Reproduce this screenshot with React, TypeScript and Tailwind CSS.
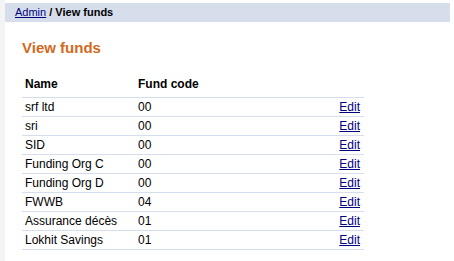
const funds = [
  { name: "srf ltd", code: "00" },
  { name: "sri", code: "00" },
  { name: "SID", code: "00" },
  { name: "Funding Org C", code: "00" },
  { name: "Funding Org D", code: "00" },
  { name: "FWWB", code: "04" },
  { name: "Assurance décès", code: "01" },
  { name: "Lokhit Savings", code: "01" },
];

export default function App() {
  return (
    <div className="flex min-h-[261px] bg-white font-['Liberation_Sans',Arial,sans-serif] text-black">
      <div className="w-[5px] shrink-0 bg-[#f4f4f4]" />
      <main className="flex-1 pt-[3px]">
        <div className="flex h-[19px] w-[445px] items-center bg-[#d6deec] pl-[10px] text-[11px]">
          <a href="#" className="text-[#000080] underline">
            Admin
          </a>
          <span className="font-bold">&nbsp;/ View funds</span>
        </div>

        <div className="pl-[17px]">
          <h1 className="mt-[17px] text-[15px] font-bold leading-[18px] text-[#d2691e]">
            View funds
          </h1>

          <table className="mt-[20px] w-[342px] border-collapse text-[12px]">
            <thead>
              <tr className="h-[20px] border-b border-[#d6deec]">
                <th className="w-[116px] pl-[3px] text-left align-top font-bold leading-[14px]">
                  Name
                </th>
                <th className="text-left align-top font-bold leading-[14px]">
                  Fund code
                </th>
                <th />
              </tr>
            </thead>
            <tbody>
              {funds.map((fund) => (
                <tr key={fund.name} className="h-[19px] border-b border-[#d6deec]">
                  <td className="pl-[3px] leading-[14px]">{fund.name}</td>
                  <td className="leading-[14px]">{fund.code}</td>
                  <td className="pr-[4px] text-right leading-[14px]">
                    <a href="#" className="text-[#000080] underline">
                      Edit
                    </a>
                  </td>
                </tr>
              ))}
            </tbody>
          </table>
        </div>
      </main>
    </div>
  );
}
